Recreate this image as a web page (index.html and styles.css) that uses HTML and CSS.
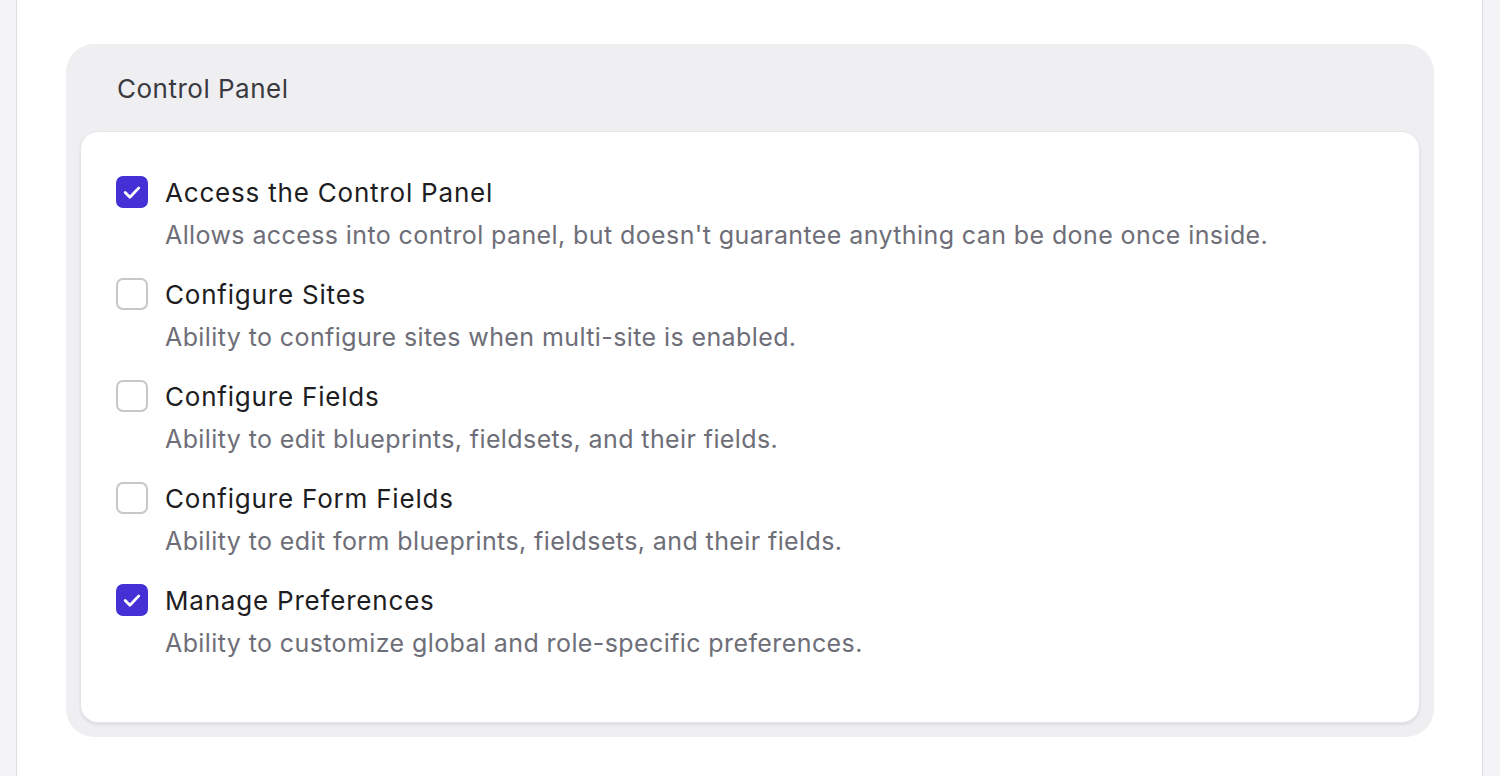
FILE: index.html
```html
<!DOCTYPE html>
<html lang="en">
<head>
<meta charset="utf-8">
<title>Control Panel</title>
<link rel="stylesheet" href="styles.css">
</head>
<body>
<div class="layout">
  <aside class="side side-left"></aside>
  <main class="main">
    <section class="panel">
      <h2 class="panel-title">Control Panel</h2>
      <div class="card">
        <div class="option">
          <span class="box checked"><svg viewBox="0 0 32 32" width="32" height="32"><path d="M9.2 16.6l4.7 4.7 8.9-9.4" fill="none" stroke="#fff" stroke-width="2.8" stroke-linecap="round" stroke-linejoin="round"/></svg></span>
          <div class="text">
            <div class="label">Access the Control Panel</div>
            <div class="desc">Allows access into control panel, but doesn't guarantee anything can be done once inside.</div>
          </div>
        </div>
        <div class="option">
          <span class="box"></span>
          <div class="text">
            <div class="label">Configure Sites</div>
            <div class="desc">Ability to configure sites when multi-site is enabled.</div>
          </div>
        </div>
        <div class="option">
          <span class="box"></span>
          <div class="text">
            <div class="label">Configure Fields</div>
            <div class="desc">Ability to edit blueprints, fieldsets, and their fields.</div>
          </div>
        </div>
        <div class="option">
          <span class="box"></span>
          <div class="text">
            <div class="label">Configure Form Fields</div>
            <div class="desc">Ability to edit form blueprints, fieldsets, and their fields.</div>
          </div>
        </div>
        <div class="option">
          <span class="box checked"><svg viewBox="0 0 32 32" width="32" height="32"><path d="M9.2 16.6l4.7 4.7 8.9-9.4" fill="none" stroke="#fff" stroke-width="2.8" stroke-linecap="round" stroke-linejoin="round"/></svg></span>
          <div class="text">
            <div class="label">Manage Preferences</div>
            <div class="desc">Ability to customize global and role-specific preferences.</div>
          </div>
        </div>
      </div>
    </section>
  </main>
  <aside class="side side-right"></aside>
</div>
</body>
</html>
```
FILE: styles.css
```css
* { box-sizing: border-box; }
html, body { margin: 0; padding: 0; }
body {
  font-family: Inter, "Noto Sans", "Liberation Sans", sans-serif;
  background: #ffffff;
  width: 1500px;
  height: 776px;
  overflow: hidden;
}
.layout {
  display: flex;
  height: 776px;
}
.side {
  background: #f4f4f6;
  flex: 0 0 auto;
}
.side-left {
  width: 17px;
  border-right: 1px solid #dedee3;
}
.side-right {
  width: 18px;
  border-left: 1px solid #dedee3;
}
.main {
  flex: 1;
  padding: 44px 48px 0 49px;
}
.panel {
  background: #efeff2;
  border-radius: 28px;
  padding: 0 14px 14px 14px;
}
.panel-title {
  margin: 0;
  font-weight: 400;
  font-size: 26px;
  letter-spacing: 0.5px;
  line-height: 30px;
  color: #3a3a40;
  padding: 30px 0 0 37px;
  height: 87px;
}
.card {
  background: #ffffff;
  border: 1px solid #e4e4e9;
  border-radius: 18px;
  box-shadow: 0 2px 3px rgba(0, 0, 0, 0.08);
  padding: 44px 35px 64px 35px;
  display: flex;
  flex-direction: column;
  gap: 28px;
}
.option {
  display: flex;
  gap: 17px;
  align-items: flex-start;
}
.box {
  flex: 0 0 32px;
  width: 32px;
  height: 32px;
  border-radius: 7px;
  border: 2px solid #c6c6cb;
  background: #fff;
  display: flex;
  align-items: center;
  justify-content: center;
}
.box.checked {
  background: #4430d4;
  border-color: #4430d4;
}
.box svg { display: block; flex: 0 0 auto; }
.text {
  display: flex;
  flex-direction: column;
  gap: 11px;
}
.label {
  font-size: 26px;
  letter-spacing: 0.8px;
  line-height: 32px;
  padding-top: 1px;
  color: #1d1d22;
}
.desc {
  font-size: 25px;
  letter-spacing: 0.4px;
  line-height: 30px;
  color: #6e6e78;
}
```
